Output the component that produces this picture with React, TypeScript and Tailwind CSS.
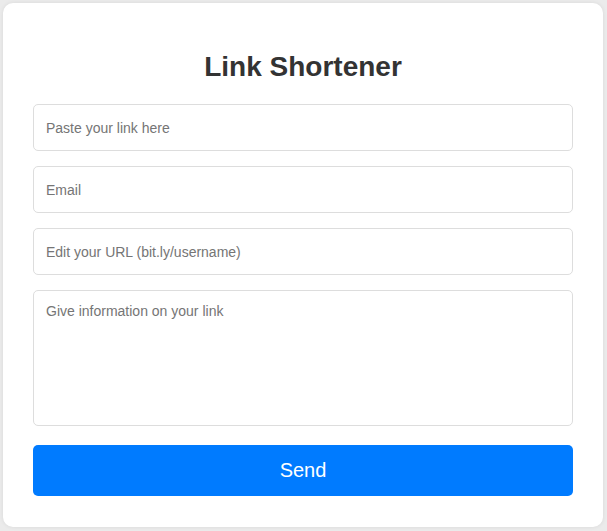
export default function App() {
  return (
    <div className="min-h-[531px] bg-[#ebebeb] pt-[3px] pl-[3px]" style={{ fontFamily: '"Liberation Sans", Arial, sans-serif' }}>
      <div className="h-[524px] w-[600px] rounded-[10px] bg-white px-[30px] pt-[48px] shadow-[0_0_4px_rgba(0,0,0,0.08)]">
        <h2 className="text-center text-[28px] font-bold leading-[32px] text-[#333333]">Link Shortener</h2>
        <div className="mt-[21px] flex flex-col">
          <input
            className="h-[47px] w-full rounded-[5px] border border-[#dddddd] px-[12px] text-[14px] text-[#333] outline-none placeholder:text-[#757575]"
            placeholder="Paste your link here"
          />
          <input
            className="mt-[15px] h-[47px] w-full rounded-[5px] border border-[#dddddd] px-[12px] text-[14px] text-[#333] outline-none placeholder:text-[#757575]"
            placeholder="Email"
          />
          <input
            className="mt-[15px] h-[47px] w-full rounded-[5px] border border-[#dddddd] px-[12px] text-[14px] text-[#333] outline-none placeholder:text-[#757575]"
            placeholder="Edit your URL (bit.ly/username)"
          />
          <textarea
            className="mt-[15px] block h-[136px] w-full resize-none rounded-[5px] border border-[#dddddd] px-[12px] py-[12px] text-[14px] leading-[16px] text-[#333] outline-none placeholder:text-[#757575]"
            placeholder="Give information on your link"
          />
          <button className="mt-[19px] h-[51px] w-full rounded-[5px] bg-[#007bff] pb-[2px] text-[20px] leading-[24px] text-white">Send</button>
        </div>
      </div>
    </div>
  );
}
